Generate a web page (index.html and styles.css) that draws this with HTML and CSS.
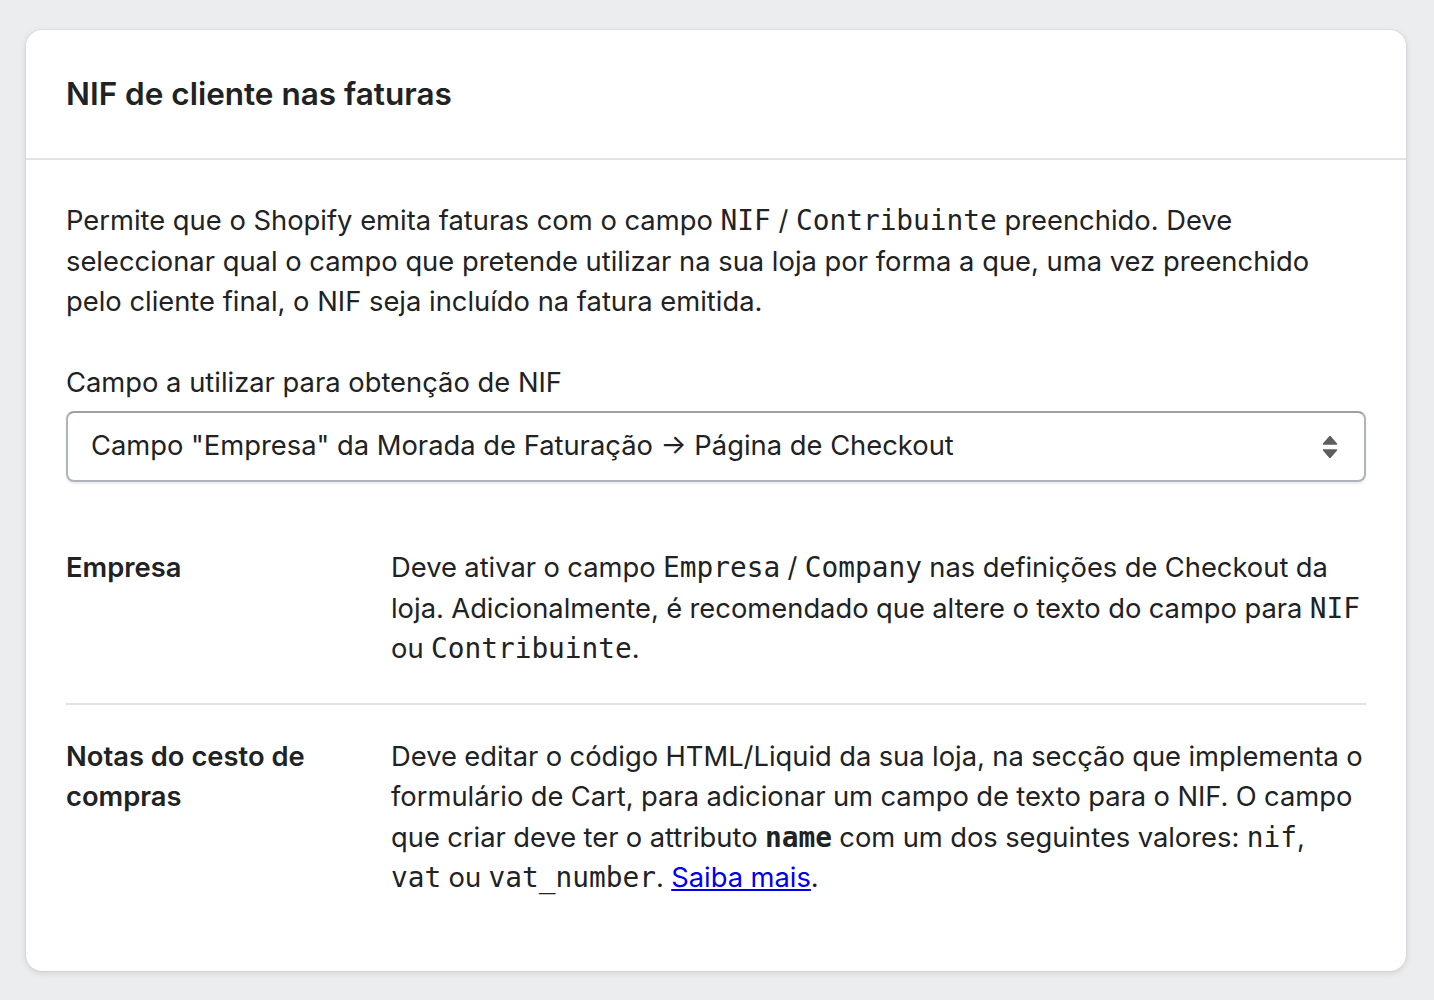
FILE: index.html
```html
<!DOCTYPE html>
<html lang="pt">
<head>
<meta charset="utf-8">
<title>NIF de cliente nas faturas</title>
<link rel="stylesheet" href="styles.css">
</head>
<body>
<div class="page">
  <section class="card">
    <header class="card-header">
      <h2 class="card-title">NIF de cliente nas faturas</h2>
    </header>
    <div class="card-body">
      <p class="intro">Permite que o Shopify emita faturas com o campo <code>NIF</code> / <code>Contribuinte</code> preenchido. Deve seleccionar qual o campo que pretende utilizar na sua loja por forma a que, uma vez preenchido pelo cliente final, o NIF seja incluído na fatura emitida.</p>
      <label class="field-label">Campo a utilizar para obtenção de NIF</label>
      <div class="select">
        <span class="select-text">Campo "Empresa" da Morada de Faturação → Página de Checkout</span>
        <svg class="select-icon" width="16" height="22" viewBox="0 0 16 22" aria-hidden="true">
          <path d="M8 0.5 L14.5 8 L1.5 8 Z" fill="#5c5f62" stroke="#5c5f62" stroke-width="1.5" stroke-linejoin="round"/>
          <path d="M8 21.5 L14.5 14 L1.5 14 Z" fill="#5c5f62" stroke="#5c5f62" stroke-width="1.5" stroke-linejoin="round"/>
        </svg>
      </div>
      <div class="options">
        <div class="option-row">
          <div class="option-name">Empresa</div>
          <div class="option-desc">Deve ativar o campo <code>Empresa</code> / <code>Company</code> nas definições de Checkout da loja. Adicionalmente, é recomendado que altere o texto do campo para <code>NIF</code> ou <code>Contribuinte</code>.</div>
        </div>
        <div class="option-row">
          <div class="option-name">Notas do cesto de compras</div>
          <div class="option-desc">Deve editar o código HTML/Liquid da sua loja, na secção que implementa o formulário de Cart, para adicionar um campo de texto para o NIF. O campo que criar deve ter o attributo <code class="strong">name</code> com um dos seguintes valores: <code>nif</code>, <span class="nowrap"><code>vat</code> ou</span> <code>vat_number</code>. <a href="#" class="link">Saiba mais</a>.</div>
        </div>
      </div>
    </div>
  </section>
</div>
</body>
</html>
```

FILE: styles.css
```css
* { box-sizing: border-box; }

html, body {
  margin: 0;
  padding: 0;
  background: #ecedef;
}

body {
  font-family: Inter, "Noto Sans", "Liberation Sans", sans-serif;
  color: #202223;
  font-size: 27.35px;
  line-height: 40.5px;
}

.page {
  padding: 30px 28px 30px 26px;
}

.card {
  background: #ffffff;
  border-radius: 16px;
  box-shadow: 0 0 0 1px rgba(63, 63, 68, 0.05), 0 2px 6px rgba(63, 63, 68, 0.15);
  overflow: hidden;
}

.card-header {
  padding: 40px 40px 40px;
  border-bottom: 2px solid #e1e3e5;
}

.card-title {
  margin: 0;
  font-size: 31.5px;
  line-height: 48px;
  font-weight: 600;
}

.card-body {
  padding: 41px 40px 40px;
}

.intro {
  margin: 0 0 40px;
}

code {
  font-family: "DejaVu Sans Mono", "Liberation Mono", monospace;
  font-size: 27.8px;
}

code.strong { font-weight: 700; }

.nowrap { white-space: nowrap; }

.field-label {
  display: block;
  margin-bottom: 8px;
}

.select {
  display: flex;
  align-items: center;
  justify-content: space-between;
  height: 71px;
  padding: 0 26px 0 23px;
  border: 2px solid #aeb4b9;
  border-top-color: #9ca1a6;
  border-radius: 8px;
  box-shadow: 0 2px 2px rgba(0, 0, 0, 0.08);
  background: #ffffff;
}

.select-text { white-space: nowrap; }

.select-icon { display: block; }

.options {
  margin-top: 34px;
}

.option-row {
  display: grid;
  grid-template-columns: 25% 75%;
  padding: 32px 0 33px;
}

.option-row + .option-row {
  border-top: 2px solid #e1e3e5;
  padding-top: 32px;
  padding-bottom: 32px;
}

.option-name {
  font-weight: 600;
  padding-right: 30px;
}

.option-desc {
  word-spacing: -0.3px;
}

.link {
  color: #0000ee;
  text-decoration: underline;
}
```
